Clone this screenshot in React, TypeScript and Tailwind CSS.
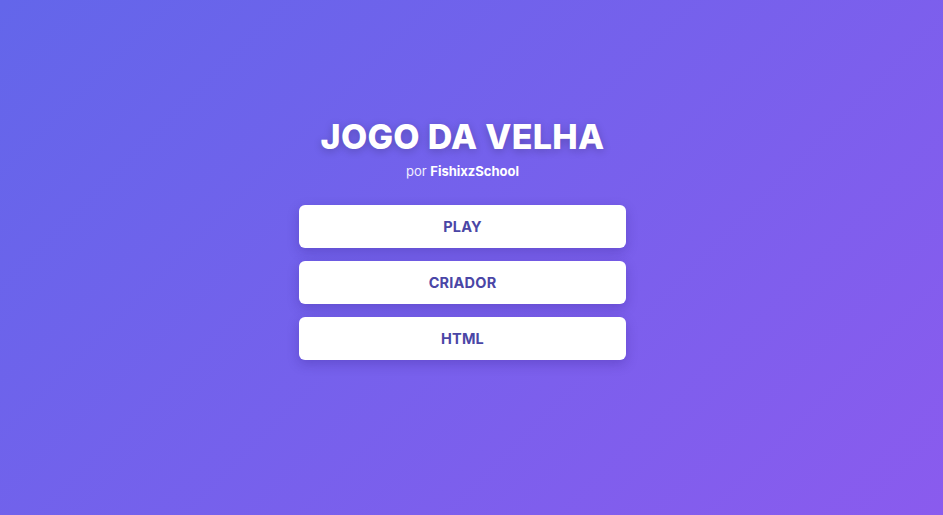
export default function App() {
  const items = ['PLAY', 'CRIADOR', 'HTML'];
  return (
    <div className="min-h-[515px] w-full bg-[linear-gradient(135deg,#6366ea_0%,#8a5bee_100%)] font-['Inter','Noto_Sans',sans-serif] flex flex-col items-center pt-[116px] pr-[18px]">
      <h1 className="text-[34px] leading-[42px] font-extrabold text-white tracking-[0.3px] [text-shadow:0_2px_8px_rgba(0,0,0,0.22)]">
        JOGO DA VELHA
      </h1>
      <p className="mt-[5px] text-[13px] leading-[16px] text-white/90">
        por <span className="font-bold text-white">FishixzSchool</span>
      </p>
      <div className="mt-[26px] flex flex-col gap-[13px] w-[327px]">
        {items.map((t) => (
          <button
            key={t}
            className="h-[43px] w-full rounded-[6px] bg-white text-[14.5px] font-bold tracking-[0.2px] text-[#4a46a6] shadow-[0_4px_12px_rgba(40,20,120,0.25)]"
          >
            {t}
          </button>
        ))}
      </div>
    </div>
  );
}
